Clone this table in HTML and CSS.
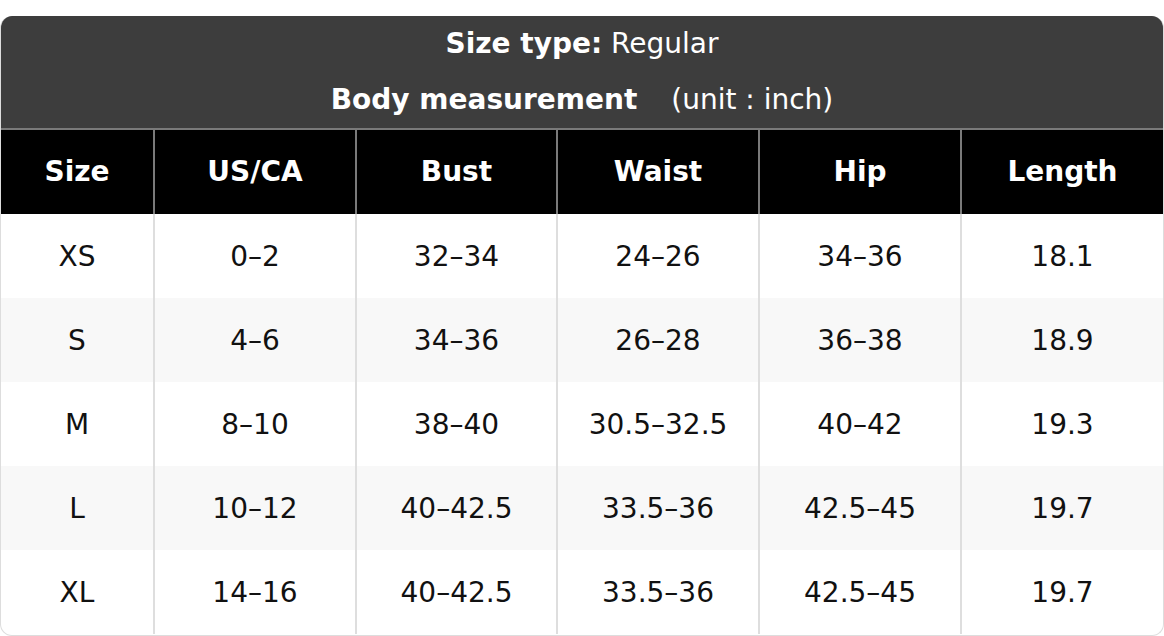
FILE: index.html
```html
<!DOCTYPE html>
<html>
<head>
<meta charset="utf-8">
<link rel="stylesheet" href="styles.css">
</head>
<body>
<div class="chart">
  <div class="caption">
    <div class="cap-line"><b>Size type:</b> Regular</div>
    <div class="cap-line"><b>Body measurement</b><span class="unit">(unit : inch)</span></div>
  </div>
  <table class="sizes">
    <colgroup>
      <col class="c1"><col class="c2"><col class="c3"><col class="c4"><col class="c5"><col class="c6">
    </colgroup>
    <thead>
      <tr><th>Size</th><th>US/CA</th><th>Bust</th><th>Waist</th><th>Hip</th><th>Length</th></tr>
    </thead>
    <tbody>
      <tr><td>XS</td><td>0–2</td><td>32–34</td><td>24–26</td><td>34–36</td><td>18.1</td></tr>
      <tr><td>S</td><td>4–6</td><td>34–36</td><td>26–28</td><td>36–38</td><td>18.9</td></tr>
      <tr><td>M</td><td>8–10</td><td>38–40</td><td>30.5–32.5</td><td>40–42</td><td>19.3</td></tr>
      <tr><td>L</td><td>10–12</td><td>40–42.5</td><td>33.5–36</td><td>42.5–45</td><td>19.7</td></tr>
      <tr><td>XL</td><td>14–16</td><td>40–42.5</td><td>33.5–36</td><td>42.5–45</td><td>19.7</td></tr>
    </tbody>
  </table>
</div>
</body>
</html>
```
FILE: styles.css
```css
html, body {
  margin: 0;
  padding: 0;
  background: #ffffff;
}
body {
  font-family: "DejaVu Sans", sans-serif;
  font-size: 28px;
}
.chart {
  margin-top: 16px;
  width: 1164px;
  height: 620px;
  box-sizing: border-box;
  border: 1px solid #dddddd;
  border-top: none;
  border-radius: 12px;
  overflow: hidden;
  display: flex;
  flex-direction: column;
}
.caption {
  background: #3d3d3d;
  color: #ffffff;
  border-bottom: 2px solid #7a7a7a;
  margin: 0 -1px;
}
.cap-line {
  height: 56px;
  box-sizing: border-box;
  padding-bottom: 2px;
  display: flex;
  align-items: center;
  justify-content: center;
  white-space: pre;
}
.cap-line b {
  font-weight: bold;
}
.unit {
  margin-left: 34px;
}
.sizes {
  border-collapse: separate;
  border-spacing: 0;
  table-layout: fixed;
  width: 1162px;
}
.c1 { width: 154px; }
.c2 { width: 202px; }
.c3 { width: 201px; }
.c4 { width: 202px; }
.c5 { width: 202px; }
.c6 { width: 201px; }
.sizes th, .sizes td {
  height: 84px;
  padding: 0;
  text-align: center;
  vertical-align: middle;
  box-sizing: border-box;
}
.sizes th {
  background: #000000;
  color: #ffffff;
  font-weight: bold;
  padding-bottom: 2px;
  border-right: 2px solid #7a7a7a;
}
.sizes td {
  color: #111111;
  border-right: 2px solid #dedede;
}
.sizes th:last-child, .sizes td:last-child {
  border-right: none;
}
.sizes tbody tr:nth-child(even) td {
  background: #f8f8f8;
}
```
